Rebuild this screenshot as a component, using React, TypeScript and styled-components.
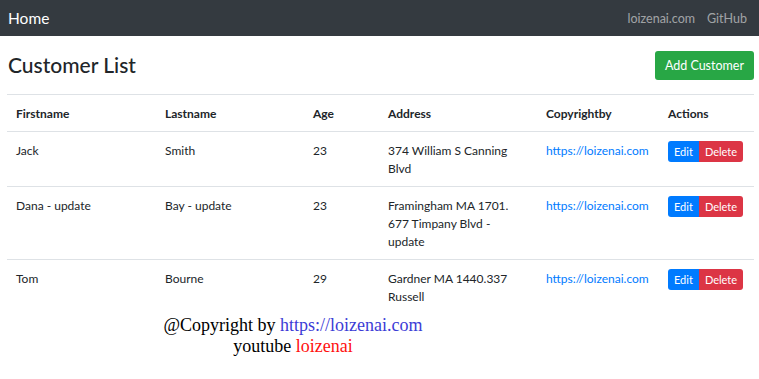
import React from "react";
import styled, { createGlobalStyle } from "styled-components";

const Global = createGlobalStyle`
  html, body { margin: 0; padding: 0; background: #fff; }
  body { font-family: Lato, "Open Sans", sans-serif; color: #212529; }
`;

const NavBar = styled.nav`
  height: 36px;
  background: #343a40;
  display: flex;
  align-items: center;
  justify-content: space-between;
  padding: 0 8px;
`;

const Brand = styled.a`
  color: #fff;
  font-size: 15.5px;
  text-decoration: none;
`;

const NavLinks = styled.div`
  display: flex;
  gap: 12px;
  padding-right: 4px;
`;

const NavLink = styled.a`
  color: rgba(255, 255, 255, 0.55);
  font-size: 12.5px;
  text-decoration: none;
`;

const Main = styled.main`
  padding: 14px 5px 0 7px;
`;

const Header = styled.div`
  display: flex;
  align-items: center;
  justify-content: space-between;
  height: 29px;
  padding-top: 1px;
  padding-left: 1px;
  margin-bottom: 14px;
`;

const Title = styled.h2`
  margin: 0 0 2px;
  font-size: 21px;
  font-weight: 500;
  line-height: 1.2;
`;

const GreenButton = styled.button`
  background: #28a745;
  color: #fff;
  border: none;
  border-radius: 3px;
  font-family: inherit;
  font-size: 12.5px;
  height: 29px;
  padding: 0 10px;
`;

const Table = styled.table`
  width: 747px;
  table-layout: fixed;
  border-collapse: collapse;
  font-size: 12px;
  line-height: 18px;
`;

const Th = styled.th<{ $w: number }>`
  box-sizing: border-box;
  width: ${(p) => p.$w}px;
  text-align: left;
  font-weight: 700;
  padding: 10px 9px 8px;
  border-top: 1px solid #dee2e6;
  border-bottom: 1px solid #dee2e6;
  vertical-align: top;
`;

const Td = styled.td`
  padding: 10px 9px 8px;
  border-bottom: 1px solid #dee2e6;
  vertical-align: top;
`;

const LastTd = styled(Td)`
  border-bottom: none;
`;

const Link = styled.a`
  color: #007bff;
  text-decoration: none;
`;

const BtnGroup = styled.div`
  display: inline-flex;
  margin-top: -1px;
`;

const SmallBtn = styled.button<{ $kind: "edit" | "delete" }>`
  border: none;
  color: #fff;
  font-family: inherit;
  font-size: 11px;
  height: 21px;
  padding: 0 6px;
  background: ${(p) => (p.$kind === "edit" ? "#007bff" : "#dc3545")};
  border-radius: ${(p) => (p.$kind === "edit" ? "3px 0 0 3px" : "0 3px 3px 0")};
`;

const Footer = styled.div`
  width: 572px;
  text-align: center;
  font-family: "Liberation Serif", serif;
  font-size: 18px;
  line-height: 21px;
  color: #000;
  margin-top: 1px;
`;

const FooterLink = styled.span`
  color: #3c3cd6;
`;

const Red = styled.span`
  color: #ff1010;
`;

const rows = [
  { f: "Jack", l: "Smith", a: 23, addr: "374 William S Canning Blvd" },
  { f: "Dana - update", l: "Bay - update", a: 23, addr: "Framingham MA 1701. 677 Timpany Blvd - update" },
  { f: "Tom", l: "Bourne", a: 29, addr: "Gardner MA 1440.337 Russell" },
];

export default function App() {
  return (
    <>
      <Global />
      <NavBar>
        <Brand>Home</Brand>
        <NavLinks>
          <NavLink>loizenai.com</NavLink>
          <NavLink>GitHub</NavLink>
        </NavLinks>
      </NavBar>
      <Main>
        <Header>
          <Title>Customer List</Title>
          <GreenButton>Add Customer</GreenButton>
        </Header>
        <Table>
          <thead>
            <tr>
              <Th $w={149}>Firstname</Th>
              <Th $w={148}>Lastname</Th>
              <Th $w={75}>Age</Th>
              <Th $w={158}>Address</Th>
              <Th $w={122}>Copyrightby</Th>
              <Th $w={95}>Actions</Th>
            </tr>
          </thead>
          <tbody>
            {rows.map((r, i) => {
              const C = i === rows.length - 1 ? LastTd : Td;
              return (
                <tr key={i}>
                  <C>{r.f}</C>
                  <C>{r.l}</C>
                  <C>{r.a}</C>
                  <C>{r.addr}</C>
                  <C>
                    <Link>https://loizenai.com</Link>
                  </C>
                  <C>
                    <BtnGroup>
                      <SmallBtn $kind="edit">Edit</SmallBtn>
                      <SmallBtn $kind="delete">Delete</SmallBtn>
                    </BtnGroup>
                  </C>
                </tr>
              );
            })}
          </tbody>
        </Table>
        <Footer>
          @Copyright by <FooterLink>https://loizenai.com</FooterLink>
          <br />
          youtube <Red>loizenai</Red>
        </Footer>
      </Main>
    </>
  );
}
